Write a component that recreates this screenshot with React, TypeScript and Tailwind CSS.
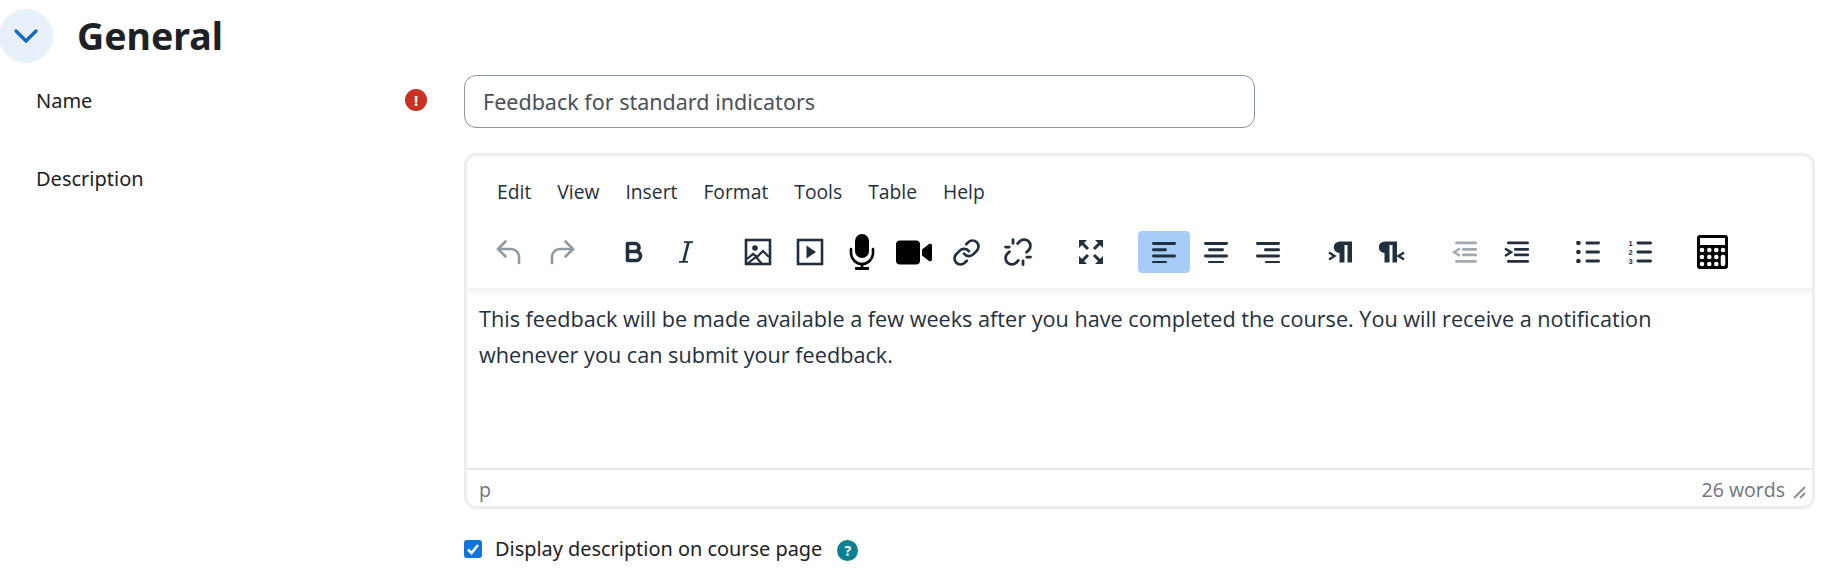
import React from 'react'
import { ChevronDown, Link, Unlink } from 'lucide-react'

const dark = '#222f3e'

function Undo({ color }: { color: string }) {
  return (
    <svg width="26" height="26" viewBox="0 0 26 26" fill="none" stroke={color} strokeWidth="2.600" strokeLinecap="round" strokeLinejoin="round">
      <path d="M9.500 2.500 2 10l7.500 7.500" />
      <path d="M2.500 10H15c4.500 0 8 3.500 8 8v6" />
    </svg>
  )
}

function Redo({ color }: { color: string }) {
  return (
    <svg width="26" height="26" viewBox="0 0 26 26" fill="none" stroke={color} strokeWidth="2.600" strokeLinecap="round" strokeLinejoin="round">
      <path d="M16.500 2.500 24 10l-7.500 7.500" />
      <path d="M23.500 10H11c-4.500 0-8 3.500-8 8v6" />
    </svg>
  )
}

function BoldIcon() {
  return (
    <svg width="20" height="24" viewBox="0 0 20 24" fill="none" stroke={dark} strokeWidth="3.600">
      <path d="M3.500 3.500h7.500a4 4 0 0 1 0 8H3.500zM3.500 11.500H12a4.500 4.500 0 0 1 0 9H3.500z" strokeLinejoin="round" />
    </svg>
  )
}

function ItalicIcon() {
  return (
    <svg width="16" height="24" viewBox="0 0 16 24" fill="none" stroke={dark}>
      <path d="M6 2.200h9M1 21.800h9" strokeWidth="1.800" />
      <path d="M10.500 2.200 5.500 21.800" strokeWidth="2.600" />
    </svg>
  )
}

function ImageIcon() {
  return (
    <svg width="28" height="28" viewBox="0 0 28 28" fill="none" stroke={dark} strokeWidth="2.600">
      <rect x="2" y="2" width="24" height="24" />
      <circle cx="11" cy="10" r="2.800" fill={dark} stroke="none" />
      <path d="m3 21 6-5 4 3 6-6 6 6M3 26l9-7 6 7" strokeWidth="2.200" />
    </svg>
  )
}

function MediaIcon() {
  return (
    <svg width="28" height="28" viewBox="0 0 28 28" fill="none" stroke={dark} strokeWidth="2.600">
      <rect x="2" y="2" width="24" height="24" />
      <path d="M10.500 7.500v13L20 14z" fill={dark} stroke="none" />
    </svg>
  )
}

function MicIcon() {
  return (
    <svg width="26" height="36" viewBox="0 0 26 36" fill="black">
      <rect x="6" y="0" width="14" height="24" rx="7" />
      <path d="M2 15v4c0 6 5 11 11 11s11-5 11-11v-4" fill="none" stroke="black" strokeWidth="2.600" strokeLinecap="round" />
      <rect x="11.600" y="29" width="2.800" height="5" />
      <rect x="6" y="33" width="14" height="3" rx="1" />
    </svg>
  )
}

function VideoIcon() {
  return (
    <svg width="36" height="25" viewBox="0 0 36 25" fill="black">
      <rect x="0" y="0.500" width="24" height="24" rx="4" />
      <path d="M26 9.500 33 4c1.200-.8 3-.2 3 1.500v14c0 1.700-1.800 2.300-3 1.500l-7-5.500z" />
    </svg>
  )
}

function FullscreenIcon() {
  return (
    <svg width="26" height="26" viewBox="0 0 26 26" fill={dark} stroke={dark}>
      <path d="M1 1h8L1 9zM25 1h-8l8 8zM1 25h8l-8-8zM25 25h-8l8-8z" strokeWidth="0" />
      <path d="M3 3l7 7M23 3l-7 7M3 23l7-7M23 23l-7-7" strokeWidth="3" />
    </svg>
  )
}

function AlignIcon({ kind }: { kind: 'left' | 'center' | 'right' }) {
  const rows =
    kind === 'left'
      ? [[0, 24], [0, 15], [0, 24], [0, 15]]
      : kind === 'center'
        ? [[0, 24], [4, 16], [0, 24], [4, 16]]
        : [[0, 24], [8, 16], [0, 24], [9, 15]]
  return (
    <svg width="24" height="22" viewBox="0 0 24 22" fill={dark}>
      {rows.map(([x, w], i) => (
        <rect key={i} x={x} y={1 + i * 6.300} width={w} height="2.900" rx="1.400" />
      ))}
    </svg>
  )
}

const pilcrow = 'M6 0H18V21H13.500V3.500H10.500V21H5.500V11.500A6 5.750 0 0 1 6 0Z'

function PilcrowLtr() {
  return (
    <svg width="24" height="22" viewBox="0 0 24 22" fill={dark}>
      <path d={pilcrow} transform="translate(6 0.500)" />
      <path d="M1 11.500 6.500 15 1 18.500" fill="none" stroke={dark} strokeWidth="2.400" />
    </svg>
  )
}

function PilcrowRtl() {
  return (
    <svg width="26" height="22" viewBox="0 0 26 22" fill={dark}>
      <path d={pilcrow} transform="translate(0 0.500)" />
      <path d="M25 11.500 19.500 15l5.500 3.500" fill="none" stroke={dark} strokeWidth="2.400" />
    </svg>
  )
}

function IndentIcon({ muted, out }: { muted?: boolean; out?: boolean }) {
  const c = muted ? '#a3a9b0' : dark
  return (
    <svg width="25" height="22" viewBox="0 0 25 22" fill={c}>
      <rect x="3" y="0.500" width="22" height="2.800" rx="1.400" />
      <rect x="10" y="7" width="15" height="2.800" rx="1" />
      <rect x="10" y="12.500" width="15" height="2.800" rx="1" />
      <rect x="3" y="19" width="22" height="2.800" rx="1.400" />
      <path d={out ? 'M8 7.500 2 11.200 8 15' : 'M1 7.500 7 11.200 1 15'} fill="none" stroke={c} strokeWidth="2.400" />
    </svg>
  )
}

function BulletIcon() {
  return (
    <svg width="24" height="22" viewBox="0 0 24 22" fill={dark}>
      {[2, 11, 20].map((y) => (
        <g key={y}>
          <circle cx="2.400" cy={y} r="2.300" />
          <rect x="9.500" y={y - 1.400} width="14.500" height="2.800" rx="1.400" />
        </g>
      ))}
    </svg>
  )
}

function NumberedIcon() {
  return (
    <svg width="24" height="26" viewBox="0 0 24 26" fill={dark}>
      {[4, 13, 22].map((y) => (
        <rect key={y} x="8.500" y={y - 1.400} width="15.500" height="2.800" rx="1.400" />
      ))}
      <g fontFamily="'Liberation Sans', sans-serif" fontWeight="700" fontSize="7.500">
        <text x="0.500" y="7">1</text>
        <text x="0.500" y="16">2</text>
        <text x="0.500" y="25">3</text>
      </g>
    </svg>
  )
}

function CalculatorIcon() {
  return (
    <svg width="31" height="34" viewBox="0 0 31 34">
      <rect width="31" height="34" rx="3" fill="black" />
      <rect x="3" y="3" width="25" height="7" fill="white" />
      <g fill="white">
        {[5, 12.300, 19.300].map((x) =>
          [15, 22, 29].map((y) => <circle key={`${x}-${y}`} cx={x} cy={y} r="2.300" />),
        )}
        <circle cx="26" cy="15" r="2.300" />
        <rect x="23.700" y="19.700" width="4.600" height="11.600" rx="2.300" />
      </g>
    </svg>
  )
}

function ToolBtn({ children, active, className = '' }: { children: React.ReactNode; active?: boolean; className?: string }) {
  return (
    <div className={`flex h-[42px] w-[52px] items-center justify-center rounded-[4px] ${active ? 'bg-[#a6ccf7]' : ''} ${className}`}>
      {children}
    </div>
  )
}

function Row({ label, error, children }: { label: string; error?: boolean; children: React.ReactNode }) {
  return (
    <div className="flex">
      <div className="flex w-[464px] shrink-0 justify-between pl-9 pr-[37px] text-[20px] text-[#1d2125]">
        <span className="mt-[11px] leading-[30px]">{label}</span>
        {error && (
          <span className="mt-[14px] flex h-[22px] w-[22px] items-center justify-center rounded-full bg-[#ca3120] text-[15px] font-bold leading-none text-white">
            !
          </span>
        )}
      </div>
      <div className="min-w-0 flex-1">{children}</div>
    </div>
  )
}

export default function App() {
  return (
    <div className="h-[585px] w-[1837px] overflow-hidden bg-white pt-[9px] font-['Noto_Sans',sans-serif] text-[#1d2125]">
      <div className="flex h-[54px] items-center">
        <div className="-ml-px flex h-[54px] w-[54px] items-center justify-center rounded-full bg-[#e7f0fa]">
          <ChevronDown size={40} strokeWidth={2} color="#0f6cbf" />
        </div>
        <h2 className="ml-[24px] text-[37.500px] font-bold leading-none">General</h2>
      </div>

      <div className="mt-[12px] flex flex-col gap-[25px]">
        <Row label="Name" error>
          <div className="flex h-[53px] w-[791px] items-center rounded-[12px] border border-[#8f959e] px-[18px] pt-[2px] text-[21.500px] text-[#495057]">
            Feedback for standard indicators
          </div>
        </Row>

        <Row label="Description">
          <div className="mr-[22px] h-[356px] overflow-hidden rounded-[12px] border-[3px] border-[#eeeeee] bg-white font-['Open_Sans',sans-serif]">
            <div className="relative z-10 h-[132px] shadow-[0_4px_8px_rgba(34,47,62,0.08)]">
              <div className="flex gap-[26px] pl-[30px] pt-[21px] text-[19.300px] leading-[30px] text-[#222f3e]">
                {['Edit', 'View', 'Insert', 'Format', 'Tools', 'Table', 'Help'].map((m) => (
                  <span key={m}>{m}</span>
                ))}
              </div>
              <div className="mt-[24px] flex items-center pl-[16px]">
                <div className="flex">
                  <ToolBtn><Undo color="#8f99a3" /></ToolBtn>
                  <ToolBtn className="w-[54px]"><Redo color="#8f99a3" /></ToolBtn>
                </div>
                <div className="ml-[19px] flex">
                  <ToolBtn><BoldIcon /></ToolBtn>
                  <ToolBtn><ItalicIcon /></ToolBtn>
                </div>
                <div className="ml-[20px] flex">
                  <ToolBtn><ImageIcon /></ToolBtn>
                  <ToolBtn><MediaIcon /></ToolBtn>
                  <ToolBtn><MicIcon /></ToolBtn>
                  <ToolBtn><VideoIcon /></ToolBtn>
                  <ToolBtn><Link size={29} strokeWidth={2.200} color={dark} /></ToolBtn>
                  <ToolBtn><Unlink size={30} strokeWidth={2.200} color={dark} /></ToolBtn>
                </div>
                <div className="ml-[21px]">
                  <ToolBtn><FullscreenIcon /></ToolBtn>
                </div>
                <div className="ml-[21px] flex">
                  <ToolBtn active><AlignIcon kind="left" /></ToolBtn>
                  <ToolBtn><AlignIcon kind="center" /></ToolBtn>
                  <ToolBtn><AlignIcon kind="right" /></ToolBtn>
                </div>
                <div className="ml-[20px] flex">
                  <ToolBtn><PilcrowLtr /></ToolBtn>
                  <ToolBtn><PilcrowRtl /></ToolBtn>
                </div>
                <div className="ml-[20px] flex">
                  <ToolBtn><IndentIcon muted out /></ToolBtn>
                  <ToolBtn><IndentIcon /></ToolBtn>
                </div>
                <div className="ml-[20px] flex">
                  <ToolBtn><BulletIcon /></ToolBtn>
                  <ToolBtn className="w-[50px]"><NumberedIcon /></ToolBtn>
                </div>
                <div className="ml-[20px]">
                  <ToolBtn><CalculatorIcon /></ToolBtn>
                </div>
              </div>
            </div>
            <div className="h-[180px] pl-[12px] pr-[60px] pt-[13px] text-[21.650px] leading-[36px] text-[#222f3e]">
              This feedback will be made available a few weeks after you have completed the course. You will receive a notification whenever you can submit your feedback.
            </div>
            <div className="flex h-[38px] items-center justify-between border-t-2 border-[#e6e6e6] pl-[12px] pr-[6px] pt-[3px] text-[19.500px] text-[#6c757d]">
              <span>p</span>
              <span className="flex items-center gap-[8px]">
                26 words
                <svg width="13" height="13" viewBox="0 0 13 13" stroke="#8a8f95" strokeWidth="2" className="mt-[5px]">
                  <path d="M1 12 12 1M7 12l5-5" />
                </svg>
              </span>
            </div>
          </div>
          <div className="mt-[25px] flex items-center text-[19.900px] leading-[30px]">
            <span className="flex h-[18px] w-[18px] items-center justify-center rounded-[3px] bg-[#0f75de]">
              <svg width="14" height="14" viewBox="0 0 14 14" fill="none" stroke="white" strokeWidth="2.600">
                <path d="m2 7.500 3.500 3.500L12 3" />
              </svg>
            </span>
            <span className="ml-[13px]">Display description on course page</span>
            <span className="ml-[15px] mt-[3px] flex h-[21px] w-[21px] items-center justify-center rounded-full bg-[#0b7f93] text-[14px] font-bold leading-none text-white">
              ?
            </span>
          </div>
        </Row>
      </div>
    </div>
  )
}
